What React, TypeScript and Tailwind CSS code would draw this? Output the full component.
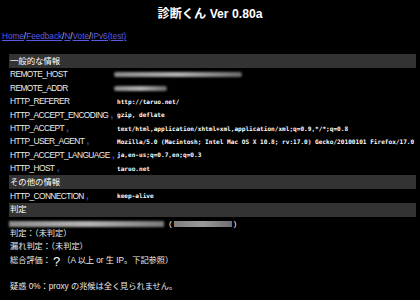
const sans = "font-['Liberation_Sans','Noto_Sans_CJK_JP',sans-serif]"
const mono = "font-['DejaVu_Sans_Mono','Liberation_Mono',monospace]"

type Row = {
  name: string
  value?: string
  blur?: string
  mark?: boolean
}

const general: Row[] = [
  { name: 'REMOTE_HOST', blur: 'w-[128px]' },
  { name: 'REMOTE_ADDR', blur: 'w-[53px]' },
  { name: 'HTTP_REFERER', value: 'http://taruo.net/' },
  { name: 'HTTP_ACCEPT_ENCODING', value: 'gzip, deflate', mark: true },
  { name: 'HTTP_ACCEPT', value: 'text/html,application/xhtml+xml,application/xml;q=0.9,*/*;q=0.8', mark: true },
  { name: 'HTTP_USER_AGENT', value: 'Mozilla/5.0 (Macintosh; Intel Mac OS X 10.8; rv:17.0) Gecko/20100101 Firefox/17.0', mark: true },
  { name: 'HTTP_ACCEPT_LANGUAGE', value: 'ja,en-us;q=0.7,en;q=0.3', mark: true },
  { name: 'HTTP_HOST', value: 'taruo.net', mark: true },
]

const other: Row[] = [{ name: 'HTTP_CONNECTION', value: 'keep-alive', mark: true }]

const links = ['Home', 'Feedback', 'N', 'Vote', 'IPv6(test)']

function Header({ title }: { title: string }) {
  return (
    <div className="h-[14px] bg-[#333333] pl-[1px] flex items-center text-[8.4px] text-white">
      {title}
    </div>
  )
}

function EnvRow({ row }: { row: Row }) {
  return (
    <div className="h-[13.4px] flex items-center">
      <div className="w-[108px] pl-[1px] text-[8.4px] tracking-[-0.6px] text-[#ececec] whitespace-nowrap">
        {row.name}
        {row.mark && <span className="text-[#2f5fff] font-bold ml-[2.5px]">,</span>}
      </div>
      {row.value && (
        <div className={`${mono} text-[6.1px] font-bold text-white whitespace-nowrap`}>{row.value}</div>
      )}
      {row.blur && (
        <div className={`${row.blur} h-[5px] -ml-[3px] rounded-full bg-gradient-to-r from-[#8a8a8a] via-[#b0b0b0] to-[#6a6a6a] blur-[0.8px]`} />
      )}
    </div>
  )
}

export default function App() {
  return (
    <div className={`${sans} bg-black w-[420px] h-[300px] overflow-hidden text-white`}>
      <div className="h-[28px] flex items-center justify-center text-[12.2px] font-bold">
        診断くん Ver 0.80a
      </div>

      <div className="mt-[4px] px-[2px] h-[10px] leading-[10px] text-[8.2px] text-[#ccc]">
        {links.map((l, i) => (
          <span key={l}>
            {i > 0 && '/'}
            <a href="#" className="text-[#5a5ae8] underline">
              {l}
            </a>
          </span>
        ))}
      </div>

      <div className="mt-[12px] ml-[9px] mr-[4px]">
        <Header title="一般的な情報" />
        {general.map((r) => (
          <EnvRow key={r.name} row={r} />
        ))}
        <Header title="その他の情報" />
        {other.map((r) => (
          <EnvRow key={r.name} row={r} />
        ))}
        <Header title="判定" />

        {/* masked host / address line */}
        <div className="mt-[3.5px] h-[8px] flex items-center gap-[2px]">
          <div className="w-[155px] h-[6px] bg-gradient-to-r from-[#8c8c8c] via-[#b5b5b5] to-[#7a7a7a] blur-[0.8px]" />
          <span className="ml-[3px] text-[8px] leading-none">(</span>
          <div className="w-[58px] h-[6px] bg-gradient-to-r from-[#7f7f7f] via-[#9a9a9a] to-[#6f6f6f] blur-[0.6px]" />
          <span className="text-[8px] leading-none">)</span>
        </div>

        <div className="pl-[1px] text-[8.2px] text-[#ececec]">
          <div className="h-[13px] flex items-center">判定：（未判定）</div>
          <div className="h-[13px] flex items-center">漏れ判定：（未判定）</div>
          <div className="h-[15px] flex items-center">
            総合評価：<span className="text-[13px] mx-[2px] text-white">?</span>（A 以上 or 生 IP。下記参照）
          </div>
          <div className="mt-[12px] h-[13px] flex items-center">疑惑 0%：proxy の兆候は全く見られません。</div>
        </div>
      </div>
    </div>
  )
}
